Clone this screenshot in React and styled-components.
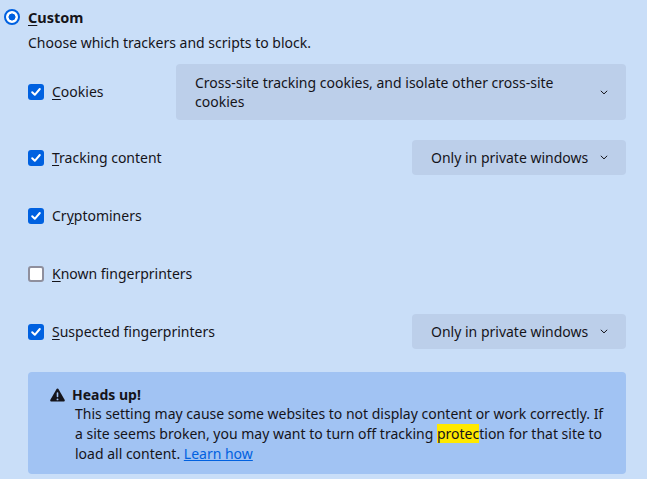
import React from 'react';
import styled, { createGlobalStyle } from 'styled-components';

const GlobalStyle = createGlobalStyle`
  html, body {
    margin: 0;
    padding: 0;
    background: #c9def8;
  }
  body {
    font-family: "Noto Sans", "Open Sans", sans-serif;
    font-size: 14px;
    line-height: 20px;
    color: #15141a;
  }
`;

function Chevron() {
  return (
    <svg width="8" height="5" viewBox="0 0 8 5">
      <path d="M0.8 0.8 L4 3.9 L7.2 0.8" fill="none" stroke="#15141a" strokeWidth="1" />
    </svg>
  );
}

function Check({ checked }) {
  return (
    <Box $checked={checked}>
      {checked && (
        <svg width="12" height="12" viewBox="0 0 12 12">
          <path d="M2.2 6.2 L4.8 8.8 L9.8 3" fill="none" stroke="#fff" strokeWidth="2" strokeLinecap="round" strokeLinejoin="round" />
        </svg>
      )}
    </Box>
  );
}

function WarnIcon() {
  return (
    <svg width="15" height="14" viewBox="0 0 15 14">
      <path d="M7.5 0.6 C8 0.6 8.4 0.9 8.7 1.4 L14.6 11.8 C15.1 12.7 14.5 13.6 13.5 13.6 L1.5 13.6 C0.5 13.6 -0.1 12.7 0.4 11.8 L6.3 1.4 C6.6 0.9 7 0.6 7.5 0.6 Z" fill="#15141a" />
      <rect x="6.7" y="4.2" width="1.6" height="5" rx="0.8" fill="#a1c3f3" />
      <circle cx="7.5" cy="11.4" r="0.95" fill="#a1c3f3" />
    </svg>
  );
}

export default function App() {
  return (
    <>
      <GlobalStyle />
      <Page>
        <Header>
          <Radio />
          <Title><u>C</u>ustom</Title>
        </Header>
        <Desc>Choose which trackers and scripts to block.</Desc>

        <List>
          <Row $tall>
            <Option>
              <Check checked />
              <span><u>C</u>ookies</span>
            </Option>
            <Select $wide>
              <SelectText $wide>Cross-site tracking cookies, and isolate other cross-site cookies</SelectText>
              <Chevron />
            </Select>
          </Row>

          <Row>
            <Option>
              <Check checked />
              <span><u>T</u>racking content</span>
            </Option>
            <Select>
              <SelectText>Only in private windows</SelectText>
              <Chevron />
            </Select>
          </Row>

          <Row>
            <Option>
              <Check checked />
              <span>Cr<u>y</u>ptominers</span>
            </Option>
          </Row>

          <Row>
            <Option>
              <Check />
              <span><u>K</u>nown fingerprinters</span>
            </Option>
          </Row>

          <Row>
            <Option>
              <Check checked />
              <span><u>S</u>uspected fingerprinters</span>
            </Option>
            <Select>
              <SelectText>Only in private windows</SelectText>
              <Chevron />
            </Select>
          </Row>
        </List>

        <Warning>
          <WarnHead>
            <WarnIcon />
            <strong>Heads up!</strong>
          </WarnHead>
          <WarnBody>
            This setting may cause some websites to not display content or work correctly. If
            a site seems broken, you may want to turn off tracking <Mark>protec</Mark>tion for that site to
            load all content. <Link href="#">Learn how</Link>
          </WarnBody>
        </Warning>
      </Page>
    </>
  );
}

const Page = styled.div`
  width: 647px;
  height: 479px;
  box-sizing: border-box;
  padding: 0 21px 0 4px;
  overflow: hidden;
`;

const Header = styled.div`
  height: 33px;
  display: flex;
  align-items: center;
  gap: 8px;
  padding-top: 1px;
  box-sizing: border-box;
`;

const Radio = styled.span`
  width: 16px;
  height: 16px;
  border-radius: 50%;
  flex-shrink: 0;
  box-sizing: border-box;
  border: 2px solid #0061e0;
  background: radial-gradient(circle, #0061e0 0 3.2px, #fff 3.8px);
`;

const Title = styled.span`
  font-weight: 700;
  font-size: 14.5px;
  u {
    text-underline-offset: 2px;
  }
`;

const Desc = styled.p`
  margin: 0 0 0 24px;
  height: 20px;
`;

const List = styled.div`
  margin: 11px 0 0 24px;
  display: flex;
  flex-direction: column;
  gap: 23px;
`;

const Row = styled.div`
  display: flex;
  align-items: center;
  justify-content: space-between;
  min-height: ${p => (p.$tall ? '56px' : '35px')};
  margin-bottom: ${p => (p.$tall ? '-3px' : '0')};

  u {
    text-underline-offset: 2px;
  }
`;

const Option = styled.label`
  display: flex;
  align-items: center;
  gap: 8px;
`;

const Box = styled.span`
  width: 16px;
  height: 16px;
  box-sizing: border-box;
  border-radius: 3px;
  display: flex;
  align-items: center;
  justify-content: center;
  background: ${p => (p.$checked ? '#0061e0' : '#fff')};
  border: ${p => (p.$checked ? 'none' : '2px solid #8f8f9d')};
`;

const Select = styled.div`
  display: flex;
  align-items: center;
  justify-content: space-between;
  gap: 6px;
  box-sizing: border-box;
  background: #bccfea;
  border-radius: 4px;
  padding: ${p => (p.$wide ? '8px 18px 8px 19px' : '0 18px 0 19px')};
  width: ${p => (p.$wide ? '450px' : '214px')};
  height: ${p => (p.$wide ? '56px' : '35px')};
`;

const SelectText = styled.span`
  max-width: ${p => (p.$wide ? '395px' : 'none')};
  line-height: 19px;
`;

const Warning = styled.div`
  margin: 23px 0 0 24px;
  background: #a1c3f3;
  border-radius: 4px;
  height: 102px;
  box-sizing: border-box;
  padding: 14px 16px 10px 22px;
`;

const WarnHead = styled.div`
  display: flex;
  align-items: center;
  gap: 7px;
  line-height: 18px;

  strong {
    font-weight: 700;
  }
`;

const WarnBody = styled.p`
  margin: 0 0 0 25px;
  line-height: 20px;
`;

const Mark = styled.span`
  background: #ffe900;
`;

const Link = styled.a`
  color: #0061e0;
  text-decoration: underline;
`;
